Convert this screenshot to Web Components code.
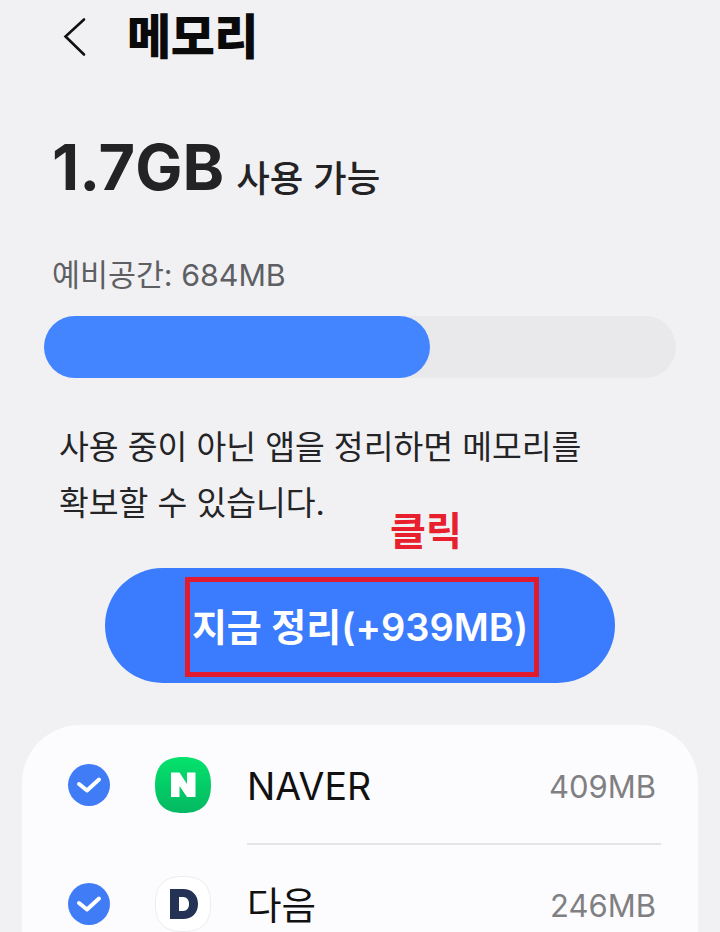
<!DOCTYPE html>
<html lang="ko"><head><meta charset="utf-8"><title>메모리</title>
<style>
html,body{margin:0;height:932px;overflow:hidden;background:#f1f1f4}
body{font-family:Inter,"Noto Sans CJK KR",sans-serif}
</style></head><body>
<memory-screen>
<app-header slot="header" title="메모리"></app-header>
<memory-summary amount="1.7GB" label="사용 가능" reserve="예비공간: 684MB" percent="61.1"></memory-summary>
<clean-action hint="클릭" label="지금 정리(+939MB)">사용 중이 아닌 앱을 정리하면 메모리를<br>확보할 수 있습니다.</clean-action>
<app-list>
<app-row name="NAVER" size="409MB" icon="naver" divider="1"></app-row>
<app-row name="다음" size="246MB" icon="daum"></app-row>
</app-list>
</memory-screen>
<script>
const FONT='Inter,"Noto Sans CJK KR",sans-serif';
function def(name,html){customElements.define(name,class extends HTMLElement{
 connectedCallback(){if(this.shadowRoot)return;const r=this.attachShadow({mode:'open'});
 r.innerHTML=html(n=>this.getAttribute(n)||'');}
});}
def('memory-screen',()=>`<style>:host{display:flex;flex-direction:column;width:720px;height:932px;overflow:hidden;font-family:${FONT}}</style><slot name="header"></slot><slot></slot>`);
def('app-header',a=>`<style>:host{display:flex;align-items:center;height:74px;padding-left:63px}
svg{display:block;width:24px;height:40px;flex:none}
h1{margin:0 0 0 40px;font:900 48px/74px ${FONT};color:#0a0a0a;letter-spacing:-.5px}</style>
<svg viewBox="0 0 24 40"><path d="M21 2.500 2.500 19.500 21 37.500" fill="none" stroke="#111" stroke-width="2.600" stroke-linecap="round"/></svg><h1>${a('title')}</h1>`);
def('memory-summary',a=>`<style>:host{display:block;padding:55px 44px 0 44px}
.top{padding-left:8px;height:76px;white-space:nowrap;color:#232325}
.n{font:700 63px/76px ${FONT}}
.l{font:500 36.500px/76px ${FONT};margin-left:12px;vertical-align:-2px}
.r{margin-top:52px;padding-left:8px;font:400 30.400px/36px ${FONT};color:#5e5f63}
.track{margin-top:23px;height:62px;border-radius:31px;background:#e9e9eb}
.fill{height:100%;border-radius:31px;background:#4285ff;width:${a('percent')}%}</style>
<div class="top"><span class="n">${a('amount')}</span><span class="l">${a('label')}</span></div>
<div class="r">${a('reserve')}</div><div class="track"><div class="fill"></div></div>`);
def('clean-action',a=>`<style>:host{display:block;padding-top:42px}
p{margin:0;padding-left:59px;font:400 32.400px/56px ${FONT};color:#242426}
.hint{height:36px;margin-top:-19px;padding-left:390px;font:700 39px/36px ${FONT};color:#e8202e}
.btn{display:flex;justify-content:center;align-items:center;width:510px;height:115px;margin:19px 0 0 105px;border-radius:58px;background:#3b7bfd}
.box{box-sizing:border-box;width:354px;height:100px;margin:3px 0 0 4px;padding-right:4px;border:5px solid #e01b30;display:flex;align-items:center;justify-content:center;color:#fff;font:600 38px/1 ${FONT};white-space:nowrap}</style>
<p><slot></slot></p><div class="hint">${a('hint')}</div><div class="btn"><div class="box">${a('label')}</div></div>`);
def('app-list',()=>`<style>:host{display:block;box-sizing:border-box;width:676px;height:300px;margin:42px 0 0 22px;padding-top:1px;background:#fcfcfe;border-radius:58px 58px 0 0}</style><slot></slot>`);
const icons={
naver:`<svg viewBox="0 0 56 56"><defs><linearGradient id="g" x1="0" y1="0" x2="0" y2="1"><stop offset="0" stop-color="#05e26c"/><stop offset="1" stop-color="#03b862"/></linearGradient></defs><path d="M28 0C46 0 56 8 56 28S46 56 28 56 0 48 0 28 10 0 28 0Z" fill="url(#g)"/><path d="M16 15.500h8.500l7.500 11.500V15.500h8.500v24.500H32L24.500 29v11H16Z" fill="#fff"/></svg>`,
daum:`<svg viewBox="0 0 56 56"><path d="M28 .5C46 .5 55.500 8 55.500 28S46 55.500 28 55.500.5 48 .5 28 10 .5 28 .5Z" fill="#fff" stroke="#ececef"/><path fill-rule="evenodd" d="M15 13h13c9 0 15 6 15 15s-6 15-15 15H15Zm9 8v14h4c4 0 6-3 6-7s-2-7-6-7Z" fill="#243255"/></svg>`};
def('app-row',a=>`<style>:host{display:grid;grid-template-columns:42px 101px 1fr auto;grid-template-rows:117px 2px;align-items:center;padding-left:46px;padding-right:42px}
.c{width:42px;height:42px;display:block}.i{justify-self:end;width:56px;height:56px}
.i svg{display:block;width:56px;height:56px}
.n{margin:4px 0 0 36px;font:400 37.500px/1 ${FONT};color:#111}
.s{margin-top:4px;font:400 31px/1 ${FONT};color:#808083}
.rule{grid-column:3/5;height:2px;margin:0 -5px 0 36px;background:#e4e4e7}
</style>
<svg class="c" viewBox="0 0 42 42"><circle cx="21" cy="21" r="21" fill="#3f7cf6"/><path d="M11 20 19 26.500 31 15.500" fill="none" stroke="#fff" stroke-width="4" stroke-linecap="round" stroke-linejoin="round"/></svg>
<div class="i">${icons[a('icon')]}</div><div class="n">${a('name')}</div><div class="s">${a('size')}</div>
${a('divider')?'<div class="rule"></div>':''}`);
</script>
</body></html>
